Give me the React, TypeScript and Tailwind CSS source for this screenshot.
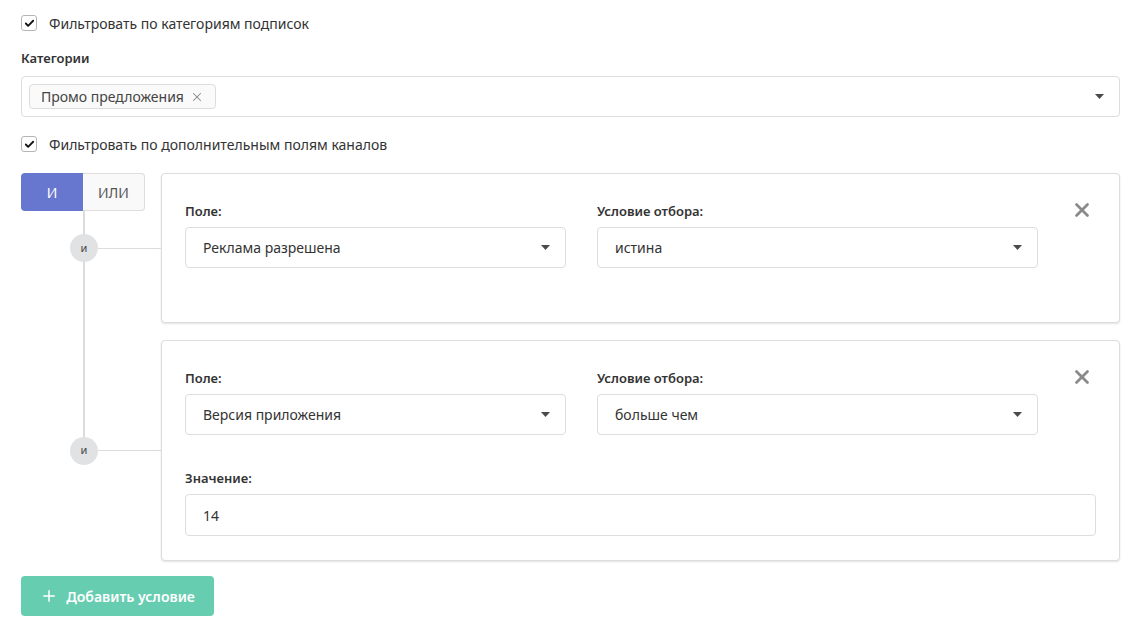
import { Check, X, Plus } from 'lucide-react'

const font = { fontFamily: '"Noto Sans", Roboto, sans-serif' }

function Caret() {
  return (
    <svg width="9" height="5" viewBox="0 0 9 5" className="shrink-0">
      <path d="M0 0h9L4.5 5z" fill="#4a4a4a" />
    </svg>
  )
}

function Checkbox({ label }: { label: string }) {
  return (
    <label className="flex items-center gap-3 h-4">
      <span className="w-4 h-4 rounded-[3px] border border-[#b5b5b5] bg-white flex items-center justify-center">
        <Check size={11} strokeWidth={4} color="#111" />
      </span>
      <span className="text-[14px] text-[#333]">{label}</span>
    </label>
  )
}

function Select({ value, w }: { value: string; w: string }) {
  return (
    <div className={`${w} h-[41px] border border-[#ddd] rounded-[4px] bg-white flex items-center justify-between pl-[17px] pr-[15px]`}>
      <span className="text-[14px] text-[#333]">{value}</span>
      <Caret />
    </div>
  )
}

function Field({ label, children }: { label: string; children: React.ReactNode }) {
  return (
    <div className="flex flex-col gap-[6px]">
      <div className="text-[13px] font-semibold text-[#333] leading-5">{label}</div>
      {children}
    </div>
  )
}

function Node() {
  return (
    <div className="w-7 h-7 rounded-full bg-[#e1e2e4] flex items-center justify-center text-[11px] text-[#444]">и</div>
  )
}

export default function App() {
  return (
    <div className="bg-white min-h-screen pl-[21px] pr-5 pt-[15px]" style={font}>
      <Checkbox label="Фильтровать по категориям подписок" />

      <div className="mt-[17px] text-[13px] font-semibold text-[#333] leading-5">Категории</div>
      <div className="mt-[8px] w-[1099px] h-[41px] border border-[#ddd] rounded-[4px] flex items-center justify-between pl-[7px] pr-[15px]">
        <span className="h-[25px] px-[11px] border border-[#ddd] rounded-[4px] bg-[#fafafa] flex items-center gap-[6px] text-[14px] text-[#444]">
          Промо предложения
          <X size={14} strokeWidth={1.8} color="#888" />
        </span>
        <Caret />
      </div>

      <div className="mt-[19px]">
        <Checkbox label="Фильтровать по дополнительным полям каналов" />
      </div>

      <div className="relative mt-[21px] flex flex-col gap-[17px]">
        {/* vertical connector */}
        <div className="absolute left-[62px] top-[38px] h-[241px] w-[2px] bg-[#dcdcdc]" />

        <div className="flex">
          <div className="relative w-[140px] shrink-0 flex items-center">
            <div className="absolute top-0 left-0 flex h-[38px] text-[14px]">
              <div className="w-[62px] bg-[#6777cf] text-white rounded-l-[4px] flex items-center justify-center">И</div>
              <div className="w-[62px] bg-[#f9f9f9] text-[#555] border border-[#ddd] border-l-0 rounded-r-[4px] flex items-center justify-center">ИЛИ</div>
            </div>
            <div className="ml-[49px] relative z-10"><Node /></div>
            <div className="flex-1 h-px bg-[#dcdcdc]" />
          </div>
          <div className="w-[959px] h-[150px] border border-[#ddd] rounded-[4px] bg-white shadow-[0_1px_2px_rgba(0,0,0,0.12)] pl-[23px] pt-[27px] flex">
            <Field label="Поле:"><Select value="Реклама разрешена" w="w-[381px]" /></Field>
            <div className="ml-[31px]"><Field label="Условие отбора:"><Select value="истина" w="w-[441px]" /></Field></div>
            <div className="ml-[33px] -mt-[2px]"><X size={22} strokeWidth={3} color="#8a8a8a" /></div>
          </div>
        </div>

        <div className="flex">
          <div className="w-[140px] shrink-0 flex items-center">
            <div className="ml-[49px] relative z-10"><Node /></div>
            <div className="flex-1 h-px bg-[#dcdcdc]" />
          </div>
          <div className="w-[959px] h-[221px] border border-[#ddd] rounded-[4px] bg-white shadow-[0_1px_2px_rgba(0,0,0,0.12)] pl-[23px] pt-[27px]">
            <div className="flex">
              <Field label="Поле:"><Select value="Версия приложения" w="w-[381px]" /></Field>
              <div className="ml-[31px]"><Field label="Условие отбора:"><Select value="больше чем" w="w-[441px]" /></Field></div>
              <div className="ml-[33px] -mt-[2px]"><X size={22} strokeWidth={3} color="#8a8a8a" /></div>
            </div>
            <div className="mt-[33px]">
              <Field label="Значение:">
                <div className="w-[911px] h-[42px] border border-[#ddd] rounded-[4px] flex items-center pl-[17px] text-[14px] text-[#333]">14</div>
              </Field>
            </div>
          </div>
        </div>
      </div>

      <button className="mt-[15px] w-[193px] h-[40px] rounded-[4px] bg-[#66cdb0] text-white text-[14px] font-semibold flex items-center justify-center gap-[8px]">
        <Plus size={18} strokeWidth={2} />
        Добавить условие
      </button>
    </div>
  )
}
